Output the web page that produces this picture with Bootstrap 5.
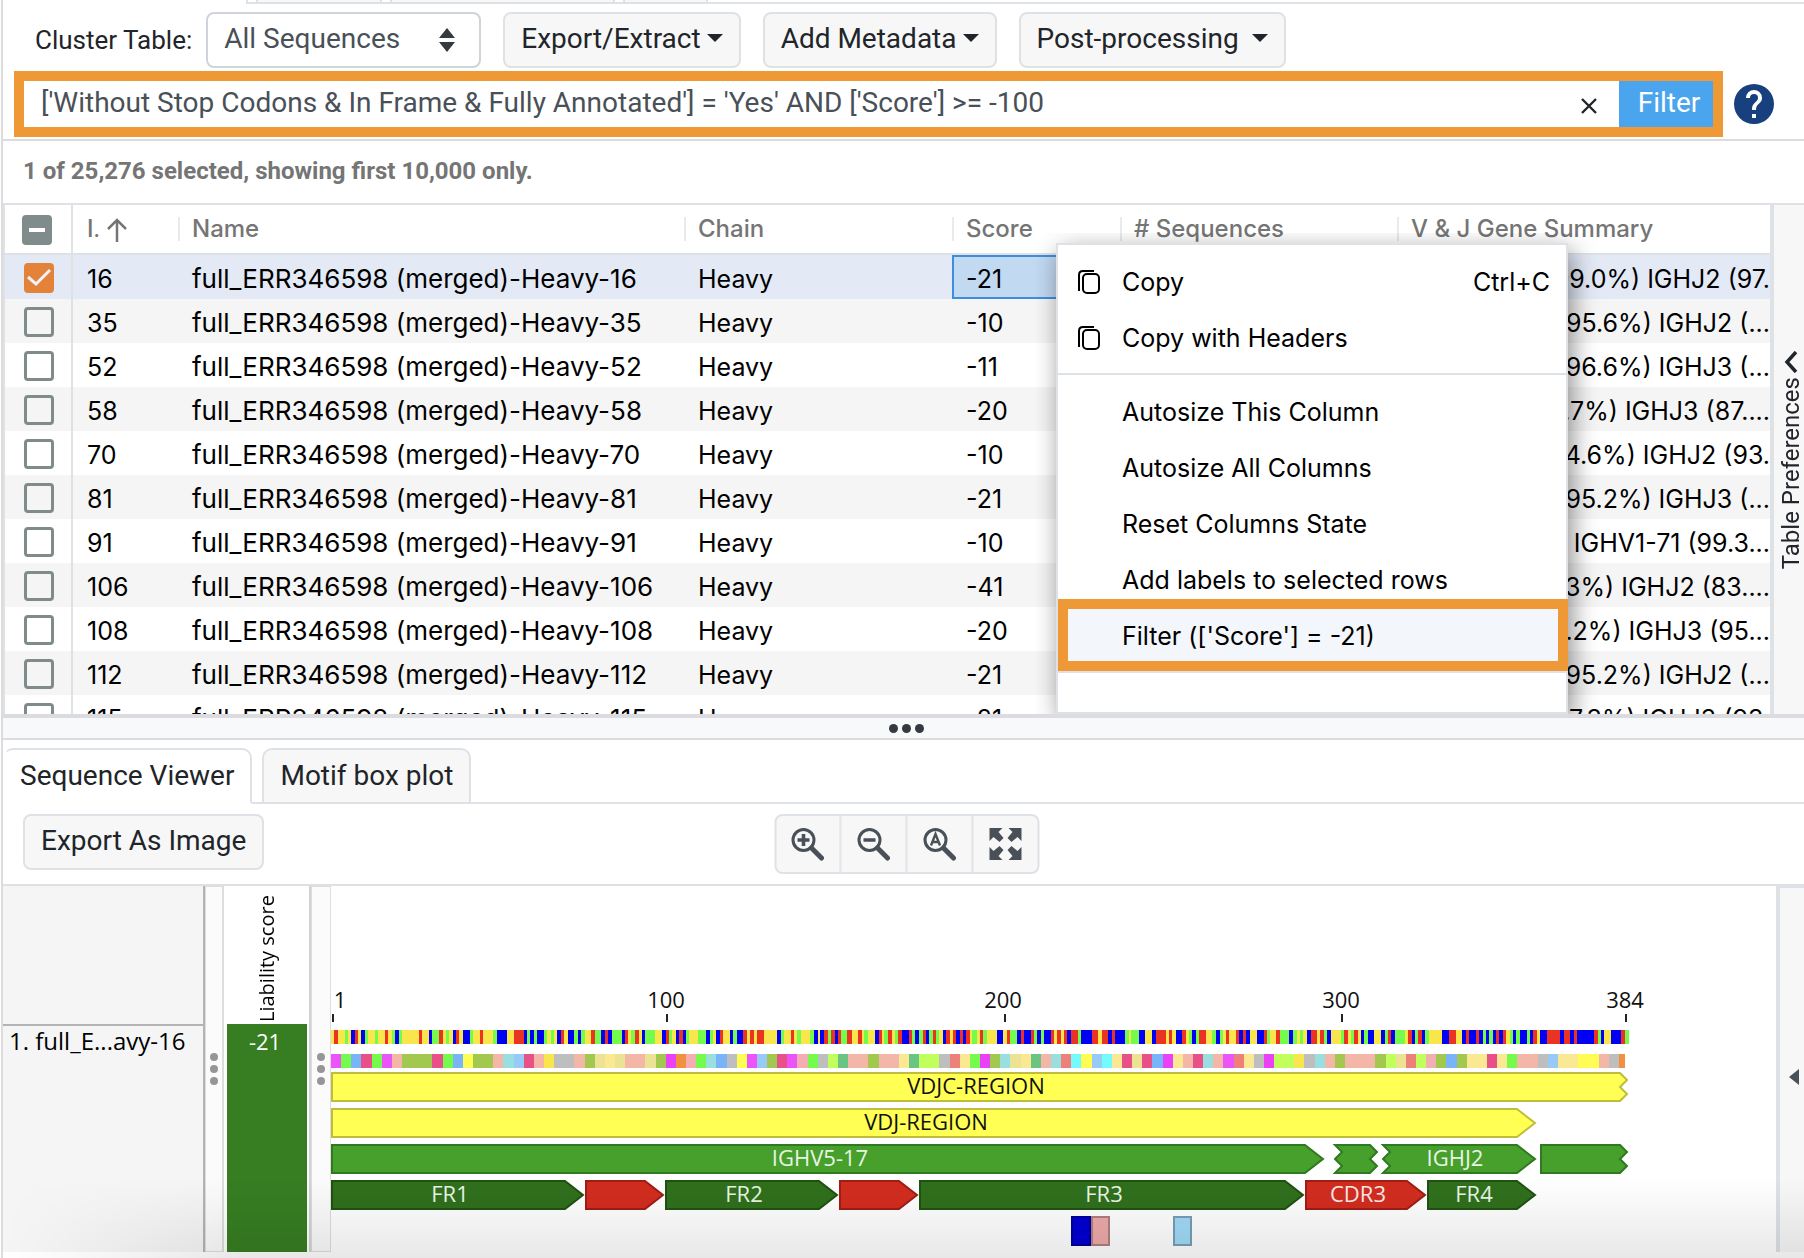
<!DOCTYPE html>
<html lang="en">
<head>
<meta charset="utf-8">
<meta name="viewport" content="width=device-width, initial-scale=1">
<title>Sequence clusters</title>
<link rel="stylesheet" href="https://cdn.jsdelivr.net/npm/bootstrap@5.3.0/dist/css/bootstrap.min.css">
<style>
  :root { --line: #dee2e6; --ink: #212529; --soft: #f7f7f8; --hl: #ef9836; }
  body { font-family: Roboto, sans-serif; font-size: 28px; line-height: 36px; color: var(--ink); background: #fff; overflow: hidden; }
  .app-shell { margin-left: 1px; border-left: 2px solid #dcdcde; position: relative; }

  .top-strip { height: 4px; padding-left: 243px; }
  .top-strip .strip-line { border-bottom: 2px solid var(--line); border-left: 2px solid var(--line); padding-left: 8px; gap: 8px; }
  .strip-stub { height: 2px; background: var(--soft); border: solid var(--line); border-width: 0 2px; }

  .tool-row { padding: 8px 32px 3px; gap: 22px; }
  .table-label { font-size: 26px; margin-right: 14px; }
  .tool-btn { font-size: 28px; line-height: 36px; padding: 7px 16px 9px; height: 56px; background: var(--soft); border: 2px solid var(--line); border-radius: 8px; color: var(--ink); white-space: nowrap; }
  .tool-btn.dropdown-toggle::after { border-top-width: 8px; border-right-width: 8px; border-left-width: 8px; margin-left: 6px; vertical-align: 6px; }
  .seq-select { width: 275px; height: 56px; font-size: 28px; line-height: 36px; padding: 7px 16px 9px; color: #495057; border: 2px solid #ced4da; border-radius: 8px;
    background-image: url("data:image/svg+xml,%3Csvg xmlns='http://www.w3.org/2000/svg' viewBox='0 0 16 24'%3E%3Cpath fill='%23343a40' d='M0 10 8 0l8 10zM0 14h16L8 24z'/%3E%3C/svg%3E");
    background-size: 16px 24px; background-position: right 24px center; }

  .query-row { padding: 0 30px 2px 11px; gap: 11px; border-bottom: 2px solid #dcdcde; }
  .query-box { border: 10px solid var(--hl); height: 66px; }
  .query-input { border: 0; outline: 0; padding: 0 0 2px 17px; font-size: 28px; color: #495057; min-width: 0; }
  .clear-btn { width: 60px; border: 0; background: none; padding: 4px 0 0; line-height: 0; }
  .filter-btn { width: 94px; border: 0; border-radius: 0; background: #4ba5ee; color: #fff; font-size: 28px; line-height: 36px; padding: 0 0 3px 6px; }
  .help-btn { border: 0; background: none; padding: 0; line-height: 0; }

  .count-line { padding: 12px 20px 14px; font-size: 24px; font-weight: 700; color: #757575; border-bottom: 2px solid var(--line); }

  .grid-area { border-bottom: 4px solid #dadce0; height: 513px; }
  .grid-pane { border-left: 2px solid var(--line); border-right: 4px solid var(--line); overflow: hidden; min-width: 0; }
  .grid-table { table-layout: fixed; width: 100%; font-family: Inter, sans-serif; font-size: 25px; color: #000; border-collapse: separate; border-spacing: 0; }
  .grid-table th { height: 50px; padding: 0 14px; font-size: 24px; font-weight: 500; color: #757575; border-bottom: 2px solid var(--line); position: relative; vertical-align: middle; line-height: 30px; white-space: nowrap; }
  .grid-table th + th + th::before { content: ""; position: absolute; left: 0; top: 12px; width: 2px; height: 24px; background: #e9eaec; }
  .grid-table td { height: 44px; padding: 3px 14px 0; vertical-align: middle; line-height: 32px; white-space: nowrap; overflow: hidden; }
  .grid-table td:nth-child(3) { font-size: 26px; }
  .grid-table tbody tr:nth-child(even) { background: #f5f5f5; }
  .grid-table tbody tr.picked { background: #e3eaf6; }
  .grid-table .tick-col { padding: 2px 0 0 19px; border-right: 2px solid var(--line); line-height: 0; }
  .grid-table th.tick-col { padding-left: 17px; }
  .grid-table .gene-cell { padding-left: 0; padding-right: 0; }
  .gene-cell > div { display: flex; justify-content: flex-end; }
  .grid-table td.focus-cell { border: 2px solid #3c8fe0; background: #c2d9f2; padding: 3px 12px 0; }
  .grid-table .tick[type=checkbox] { width: 30px; height: 30px; margin: 0; border: 3px solid #7f8c8b; border-radius: 4px; background-color: transparent; vertical-align: middle; }
  .grid-table .tick[type=checkbox]:checked { background-color: #e38239; border-color: #e38239; background-size: 30px 30px; background-position: center; background-origin: border-box;
    background-image: url("data:image/svg+xml,%3Csvg xmlns='http://www.w3.org/2000/svg' viewBox='0 0 30 30'%3E%3Cpath fill='none' stroke='%23eef2fa' stroke-width='3' d='M4 14l8 7L26 7'/%3E%3C/svg%3E"); }
  .grid-table .tick[type=checkbox]:indeterminate { background-color: #7f8c8b; border-color: #7f8c8b; background-size: 30px 30px; background-position: center; background-origin: border-box;
    background-image: url("data:image/svg+xml,%3Csvg xmlns='http://www.w3.org/2000/svg' viewBox='0 0 30 30'%3E%3Cpath stroke='%23fff' stroke-width='4' d='M7 15h16'/%3E%3C/svg%3E"); }
  .prefs-tab { width: 30px; background: var(--soft); border: 0; padding: 146px 0 0 3px; font-size: 24px; line-height: 30px; color: var(--ink); gap: 4px; }
  .upright { writing-mode: vertical-rl; transform: rotate(180deg); white-space: nowrap; }

  .ctx-menu { position: absolute; left: 1053px; top: 243px; width: 512px; height: 471px; background: #fff; border: 2px solid var(--line); box-shadow: 4px 8px 24px rgba(0,0,0,.45); clip-path: inset(-10px -40px 0 -20px); font-family: Inter, sans-serif; font-size: 25px; color: #000; z-index: 5; }
  .ctx-group { padding: 8px 0; border-bottom: 2px solid var(--line); margin: 0; list-style: none; }
  .ctx-item { display: flex; align-items: center; width: 100%; height: 56px; border: 0; background: none; padding: 2px 16px 0 18px; color: #000; text-align: left; }
  .ctx-icon { width: 46px; line-height: 0; }
  .ctx-item.hot { width: calc(100% + 2px); height: 72px; margin: -8px 0 -8px; border: 10px solid var(--hl); background: #f3f6fb; padding: 2px 8px 0 8px; position: relative; }

  .splitter { height: 22px; background: #f8f9fb; border-bottom: 2px solid #dadce0; gap: 4px; padding-left: 6px; }
  .splitter i { width: 9px; height: 9px; border-radius: 50%; background: #343a40; }

  .view-tabs { padding-top: 8px; border-bottom: 0; }
  .view-tabs .nav-link { height: 56px; padding: 6px 16px; font-size: 28px; line-height: 36px; color: var(--ink); border: 2px solid var(--line); border-radius: 10px 10px 0 0; background: var(--soft); margin: 0; }
  .view-tabs .nav-link.active { background: #fff; color: var(--ink); border-bottom-color: #fff; border-left-color: #fff; padding-left: 15px; }
  .tab-rest { border-bottom: 2px solid var(--line); min-width: 10px; }
  .view-tools { padding: 10px 20px; border-bottom: 2px solid #dfe0e1; min-height: 82px; }
  .zoom-set { position: absolute; left: 50%; transform: translateX(-50%); margin-left: 3px; }
  .zoom-set .btn { width: 67px; height: 60px; padding: 0; background: var(--soft); border: 2px solid var(--line); border-radius: 8px; line-height: 0; }
  .zoom-set .btn + .btn { border-left-width: 1px; }

  .seq-view { font-family: "Open Sans", sans-serif; color: #000; position: relative; padding-bottom: 6px; }
  .seq-body { height: 366px; }
  .name-pane { width: 202px; background: #f5f5f6; border-right: 2px solid #b4b4b4; font-size: 24px; line-height: 30px; }
  .name-pane .head-space { height: 140px; border-bottom: 2px solid #b4b4b4; }
  .name-pane .seq-name { padding: 0 6px; }
  .drag-bar { width: 19px; background: #fbfbfb; border: 1px solid #ddd; border-right-width: 2px; gap: 4px; }
  .drag-bar + .score-pane + .drag-bar { width: 20px; border-right-width: 1px; }
  .drag-bar i { width: 8px; height: 8px; border-radius: 50%; background: #969696; }
  .score-pane { width: 87px; padding: 0 2px 0 3px; border-right: 2px solid #d2d2d2; font-size: 22px; line-height: 28px; }
  .score-head { height: 138px; padding-bottom: 2px; font-size: 20px; }
  .score-value { background: #377e22; color: #fff; padding: 3px 12px 0 0; }
  .track-pane { min-width: 0; overflow: hidden; }
  .track-pane svg { display: block; }
  .side-toggle { width: 28px; margin-top: -2px; background: var(--soft); border: solid var(--line); border-width: 4px 0 0 4px; padding: 14px 0 0 4px; line-height: 0; }
  .fade-foot { position: absolute; left: 0; right: 0; bottom: 0; height: 80px; background: linear-gradient(rgba(0,0,0,0), rgba(0,0,0,.09)); -webkit-mask-image: linear-gradient(90deg, transparent, #000 240px); mask-image: linear-gradient(90deg, transparent, #000 240px); pointer-events: none; }
</style>
<script src="https://cdn.jsdelivr.net/npm/bootstrap@5.3.0/dist/js/bootstrap.bundle.min.js"></script>
</head>
<body>
<div class="app-shell">
  <div class="top-strip"><div class="strip-line d-flex">
    <div class="strip-stub" style="width:126px"></div><div class="strip-stub" style="width:225px"></div><div class="strip-stub" style="width:85px"></div>
  </div></div>

  <div class="tool-row d-flex align-items-center">
    <div class="d-flex align-items-center">
      <label for="clusterTable" class="table-label">Cluster Table:</label>
      <select id="clusterTable" class="form-select seq-select flex-shrink-0"><option>All Sequences</option></select>
    </div>
    <button type="button" class="btn tool-btn dropdown-toggle">Export/Extract</button>
    <button type="button" class="btn tool-btn dropdown-toggle">Add Metadata</button>
    <button type="button" class="btn tool-btn dropdown-toggle">Post-processing&nbsp;</button>
  </div>

  <div class="query-row d-flex align-items-center">
    <div class="query-box d-flex flex-grow-1">
      <input class="query-input flex-grow-1" type="text" aria-label="Filter query" value="['Without Stop Codons &amp; In Frame &amp; Fully Annotated'] = 'Yes' AND ['Score'] &gt;= -100">
      <button type="button" class="clear-btn" aria-label="Clear"><svg width="16" height="16" viewBox="0 0 16 16"><path d="M1 1l14 14M15 1L1 15" stroke="#212529" stroke-width="2.4" fill="none"/></svg></button>
      <button type="button" class="btn filter-btn">Filter</button>
    </div>
    <button type="button" class="help-btn" aria-label="Help"><svg width="40" height="40" viewBox="0 0 24 24"><path fill="#183f7e" d="M12 0a12 12 0 100 24 12 12 0 000-24zm1.200 20.400h-2.400V18h2.400zm2.500-9.300l-1.100 1.100c-.9.900-1.400 1.600-1.400 3.400h-2.400V15c0-1.300.5-2.500 1.400-3.400l1.500-1.500c.4-.4.700-1 .7-1.700a2.400 2.400 0 10-4.800 0H7.200a4.800 4.800 0 119.600 0c0 1.100-.4 2-1.100 2.700z"/></svg></button>
  </div>

  <div class="count-line">1 of 25,276 selected, showing first 10,000 only.</div>

  <div class="grid-area d-flex">
    <div class="grid-pane flex-grow-1">
      <table class="grid-table">
        <colgroup><col style="width:68px"><col style="width:105px"><col style="width:506px"><col style="width:268px"><col style="width:168px"><col style="width:277px"><col></colgroup>
        <thead><tr>
          <th class="tick-col"><input type="checkbox" id="tickAll" class="form-check-input tick" aria-label="Select all"></th>
          <th>I<small>.</small> <svg width="22" height="26" viewBox="0 0 22 26"><path d="M11 25V3M2 12l9-9 9 9" fill="none" stroke="#757575" stroke-width="2.500"/></svg></th>
          <th>Name</th><th>Chain</th><th>Score</th><th># Sequences</th><th>V &amp; J Gene Summary</th>
        </tr></thead>
        <tbody id="gridRows"></tbody>
      </table>
    </div>
    <button type="button" class="prefs-tab d-flex flex-column align-items-center">
      <svg width="14" height="22" viewBox="0 0 14 22"><path d="M12 1L3 11l9 10" fill="none" stroke="#212529" stroke-width="3.500"/></svg>
      <span class="upright">Table Preferences</span>
    </button>
  </div>

  <div class="ctx-menu" role="menu">
    <ul class="ctx-group">
      <li><button class="ctx-item" role="menuitem"><span class="ctx-icon"><svg width="26" height="26" viewBox="0 0 26 26"><g fill="none" stroke="#000" stroke-width="2"><rect x="7" y="5" width="16" height="19" rx="4"/><path d="M3 22V6q0-4 4-4h11"/></g></svg></span>Copy<span class="ms-auto">Ctrl+C</span></button></li>
      <li><button class="ctx-item" role="menuitem"><span class="ctx-icon"><svg width="26" height="26" viewBox="0 0 26 26"><g fill="none" stroke="#000" stroke-width="2"><rect x="7" y="5" width="16" height="19" rx="4"/><path d="M3 22V6q0-4 4-4h11"/></g></svg></span>Copy with Headers</button></li>
    </ul>
    <ul class="ctx-group">
      <li><button class="ctx-item" role="menuitem"><span class="ctx-icon"></span>Autosize This Column</button></li>
      <li><button class="ctx-item" role="menuitem"><span class="ctx-icon"></span>Autosize All Columns</button></li>
      <li><button class="ctx-item" role="menuitem"><span class="ctx-icon"></span>Reset Columns State</button></li>
      <li><button class="ctx-item" role="menuitem"><span class="ctx-icon"></span>Add labels to selected rows</button></li>
      <li><button class="ctx-item hot" role="menuitem"><span class="ctx-icon"></span>Filter (['Score'] = -21)</button></li>
    </ul>
  </div>

  <div class="splitter d-flex align-items-center justify-content-center"><i></i><i></i><i></i></div>

  <div class="view-tabs nav nav-tabs flex-nowrap" role="tablist">
    <button class="nav-link active" role="tab" aria-selected="true">Sequence Viewer</button>
    <div class="tab-rest"></div>
    <button class="nav-link" role="tab" aria-selected="false">Motif box plot</button>
    <div class="tab-rest flex-grow-1"></div>
  </div>

  <div class="view-tools d-flex align-items-start position-relative">
    <button type="button" class="btn tool-btn">Export As Image</button>
    <div class="btn-group zoom-set">
      <button type="button" class="btn" aria-label="Zoom in"><svg width="34" height="34" viewBox="0 0 34 34"><g fill="none" stroke="#495057"><circle cx="13" cy="13" r="10.500" stroke-width="3"/><path d="M21 21l10 10" stroke-width="5" stroke-linecap="round"/><path d="M7 13h12M13 7v12" stroke-width="3.600"/></g></svg></button>
      <button type="button" class="btn" aria-label="Zoom out"><svg width="34" height="34" viewBox="0 0 34 34"><g fill="none" stroke="#495057"><circle cx="13" cy="13" r="10.500" stroke-width="3"/><path d="M21 21l10 10" stroke-width="5" stroke-linecap="round"/><path d="M7 13h12" stroke-width="3.600"/></g></svg></button>
      <button type="button" class="btn" aria-label="Zoom to automatic level"><svg width="34" height="34" viewBox="0 0 34 34"><g fill="none" stroke="#495057"><circle cx="13" cy="13" r="10.500" stroke-width="3"/><path d="M21 21l10 10" stroke-width="5" stroke-linecap="round"/><path d="M8.500 18.500L13 7l4.500 11.500M10 15h6" stroke-width="2.400"/></g></svg></button>
      <button type="button" class="btn" aria-label="Full screen"><svg width="34" height="34" viewBox="0 0 34 34"><path fill="#495057" d="M1 1h13l-4 4 5 6-4 4-6-5-4 4zM33 1v13l-4-4-6 5-4-4 5-6-4-4zM1 33V20l4 4 6-5 4 4-5 6 4 4zM33 33H20l4-4-5-6 4-4 6 5 4-4z"/></svg></button>
    </div>
  </div>

  <div class="seq-view">
    <div class="seq-body d-flex">
      <div class="name-pane flex-shrink-0"><div class="head-space"></div><div class="seq-name text-nowrap">1. full_E...avy-16</div></div>
      <div class="drag-bar d-flex flex-column align-items-center justify-content-center flex-shrink-0"><i></i><i></i><i></i></div>
      <div class="score-pane d-flex flex-column flex-shrink-0">
        <div class="score-head d-flex justify-content-center"><span class="upright">Liability score</span></div>
        <div class="score-value flex-grow-1 text-center ps-2">-21</div>
      </div>
      <div class="drag-bar d-flex flex-column align-items-center justify-content-center flex-shrink-0"><i></i><i></i><i></i></div>
      <div class="track-pane flex-grow-1"><svg id="tracks" width="1330" height="366" font-family="Open Sans, sans-serif" font-size="22" text-anchor="middle"></svg></div>
      <button type="button" class="side-toggle flex-shrink-0" aria-label="Open side panel"><svg width="10" height="16" viewBox="0 0 10 16"><path d="M10 0v16L0 8z" fill="#495057"/></svg></button>
    </div>
    <div class="fade-foot"></div>
  </div>
</div>

<script>
  document.getElementById('tickAll').indeterminate = true;

  // id, score, gene summary
  const rows = [
    [16, -21, '(99.0%) IGHJ2 (97.'], [35, -10, '(95.6%) IGHJ2 (...'], [52, -11, '(96.6%) IGHJ3 (...'], [58, -20, '.7%) IGHJ3 (87....'],
    [70, -10, '94.6%) IGHJ2 (93.'], [81, -21, '(95.2%) IGHJ3 (...'], [91, -10, 'IGHV1-71 (99.3...'], [106, -41, '3%) IGHJ2 (83....'],
    [108, -20, '.2%) IGHJ3 (95...'], [112, -21, '(95.2%) IGHJ2 (...'], [115, -21, '7.3%) IGHJ3 (93.']
  ];
  document.getElementById('gridRows').innerHTML = rows.map(([id, score, gene], i) => `
    <tr class="${i ? '' : 'picked'}">
      <td class="tick-col"><input type="checkbox" class="form-check-input tick" aria-label="Select ${id}" ${i ? '' : 'checked'}></td>
      <td>${id}</td><td>full_ERR346598 (merged)-Heavy-${id}</td><td>Heavy</td>
      <td class="${i ? '' : 'focus-cell'}">${score}</td><td></td><td class="gene-cell"><div>${gene}</div></td>
    </tr>`).join('');

  // Nucleotide track: start offset (thirds of a pixel) and colour letter, one group per stretch
  const base = { Y: '#f8e64c', R: '#ea3323', G: '#75fb4c', B: '#0000f5' };
  const stretches = [
    [33, '33Y 41R 54Y 74G 84Y 93B 105R 114Y 123B 135G 145Y 164G 174Y 195R 204Y 217G 225B 237G 246Y 296R 306Y 327B 336G 357R 369Y 377G 387Y 399B 408R 417Y 429B 450G 459Y 480R 489Y 519G 530B 561Y 581R 611B 621G 630B 641G 651B 672G 681Y 692G 702Y 711B 723R 732Y 744B 761G 773B 783G 795Y 812R 825G 843B 855R 864B 876G 906B 916R 924Y 933G 945R 957Y 966B 975G 1005Y 1026B 1038R 1047G 1056Y 1068B 1076R 1089B 1098G 1107Y 1135G 1157B 1170G 1178Y 1188B 1200R 1209Y 1229B 1238G 1250B 1269R 1281Y 1290R 1302Y 1311R 1331Y 1370B 1383G 1392Y 1412R 1421Y 1430G 1443Y 1470G 1482B 1494Y'],
    [-1467, '1B 11R 24G 32R 44B 53R 62G 82R 95Y 113R 125Y 132G 145Y 164B 176R 186Y 192G 205R 216Y 224G 235R 246B 266R 276G 286B 296G 308R 317B 326G 338R 348G 357Y 368B 377R 389Y 399R 407B 419R 428B 437R 449Y 457G 471Y 479R 488G 500Y 530B 550Y 561R 569G 590B 602R 611B 632R 641G 651B 662G 671B 692R 702Y 711R 722Y 731R 742B 752R 773G 782B 815R 833Y 845R 863B 875R 884B 914G 926Y 934G 956B 976Y 995B 1007R 1037Y 1048R 1057Y 1067B 1087R 1097Y 1108G 1117B 1127G 1138R 1157Y 1177G 1189B 1199G 1209Y 1219R 1228Y 1249R 1258B 1270R 1279B 1290Y 1310B 1331R 1340G 1350Y 1368R 1381G 1408B 1420G 1430Y'],
    [-2907, '0G 10Y 21B 32R 51Y 61R 73G 82B 92Y 123G 132R 143Y 153G 162R 174Y 183B 193G 204B 223Y 244B 255G 264R 274B 286G 315Y 324R 336B 346G 355R 366B 376G 388Y 426B 447R 468Y 486B 498R 507B 528R 537B 549G 558B 568G 580B 588R 597B 609R 618Y 630G 639B 649G 660B 681G 690B 700R 711Y 720B 741R 780B 792R 810B 822R 831B 882R 894G 903B 912Y 933B 963R 975G']
  ];
  const runs = stretches.flatMap(([off, s]) => s.split(' ').map(t => [(parseInt(t) - off) / 3, t.slice(-1)]));
  runs.push([1298, '']);
  let out = '';
  for (let i = 0; i < runs.length - 1; i++)
    out += `<rect x="${runs[i][0].toFixed(1)}" y="144" width="${(runs[i + 1][0] - runs[i][0]).toFixed(1)}" height="14" fill="${base[runs[i][1]]}"/>`;

  // Translation track: one letter per residue
  const residue = { M: '#ea54f8', G: '#75fb4c', B: '#79b4f9', P: '#e85088', S: '#f4b6a6', O: '#a2c850', Y: '#fffd54', C: '#9adfe0', L: '#97caf6', W: '#f8e64c', K: '#ebe294', H: '#fbe893', g: '#bebebe', m: '#ea40f6', o: '#f09040', p: '#f2aeb0', E: '#6ac482', l: '#c0ff5c', R: '#ee807a', T: '#74fbfd' };
  const protein = 'MGBPGMSOOOPGBYOOSCLPSWggSOKHKSSKOmopGCBgYMLOPMpGglESSOSSHEllgRHGmOCKHESCRTYLTHPKPBmHSPCSMRHgmllWgCSOSSSOlKRlpOBOHHPHGSSgLHHYYSgo';
  [...protein].forEach((c, i) => {
    const x = i * 10.14;
    out += `<rect x="${x.toFixed(1)}" y="168" width="${(Math.min(x + 10.6, 1294) - x).toFixed(1)}" height="14" fill="${residue[c]}"/>`;
  });

  // Ruler
  [[1, 2, 9], [100, 336, 335], [200, 674, 672], [300, 1011, 1010], [384, 1295, 1294]].forEach(([n, t, x]) =>
    out += `<rect x="${t - 1}" y="128" width="2" height="8" fill="#222"/><text x="${x}" y="122" fill="#111">${n}</text>`);
  out = `<g shape-rendering="crispEdges">${out}</g>`;

  // Annotations: x1, x2, y, left edge, right edge, fill and stroke, label, label x, label fill
  const D = ['#30701d', '#215113'], A = ['#479f2c', '#2f7a20'], V = ['#ffff54', '#bfbd3c'], N = ['#d22d1f', '#9f1e15'];
  const marks = [
    [0, 1297, 186, 'flat', 'torn', V, 'VDJC-REGION', 645, '#111'],
    [0, 1205, 222, 'flat', 'arrow', V, 'VDJ-REGION', 595, '#111'],
    [0, 993, 258, 'flat', 'arrow', A, 'IGHV5-17', 489, '#e8f5e4'],
    [1003, 1047, 258, 'torn', 'torn', A], [1051, 1205, 258, 'torn', 'arrow', A, 'IGHJ2', 1124, '#e8f5e4'], [1209, 1297, 258, 'flat', 'torn', A],
    [0, 253, 294, 'flat', 'arrow', D, 'FR1', 119, '#e8f5e4'], [254, 333, 294, 'flat', 'arrow', N],
    [334, 507, 294, 'flat', 'arrow', D, 'FR2', 413, '#e8f5e4'], [508, 587, 294, 'flat', 'arrow', N],
    [588, 973, 294, 'flat', 'arrow', D, 'FR3', 773, '#e8f5e4'], [974, 1095, 294, 'flat', 'arrow', N, 'CDR3', 1027, '#fbe9e7'],
    [1096, 1205, 294, 'flat', 'arrow', D, 'FR4', 1143, '#e8f5e4'],
    [740, 760, 330, 'flat', 'flat', ['#0000d2', '#00009a']], [760, 779, 330, 'flat', 'flat', ['#eeaaaa', '#b07f80']], [842, 861, 330, 'flat', 'flat', ['#a1daf7', '#789fb5']]
  ];
  marks.forEach(([a, b, y, l, r, [f, s], label, lx, lf]) => {
    const x1 = a + 1, x2 = b - 1, t = y + 1, m = y + 15, e = y + 29;
    const right = { flat: `${x2},${t} ${x2},${e}`, arrow: `${x2 - 18},${t} ${x2},${m} ${x2 - 18},${e}`, torn: `${x2 - 7},${t} ${x2},${y + 8} ${x2 - 7},${m} ${x2},${y + 22} ${x2 - 7},${e}` }[r];
    const left = { flat: `${x1},${e} ${x1},${t}`, torn: `${x1},${e} ${x1 + 7},${y + 22} ${x1},${m} ${x1 + 7},${y + 8} ${x1},${t}` }[l];
    out += `<polygon points="${right} ${left}" fill="${f}" stroke="${s}" stroke-width="2"/>`;
    if (label) out += `<text x="${lx}" y="${y + 22}" fill="${lf}">${label}</text>`;
  });
  document.getElementById('tracks').innerHTML = out;
</script>
</body>
</html>
